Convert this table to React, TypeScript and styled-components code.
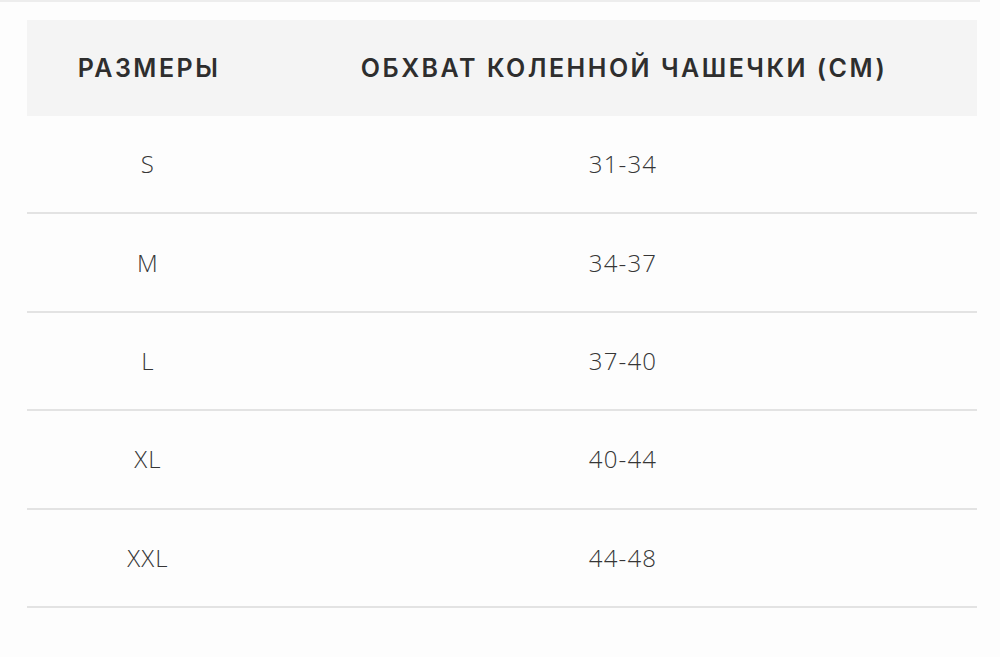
import styled, { createGlobalStyle } from 'styled-components';

type TSizeRow = {
  size: string;
  range: string;
};

const rows: TSizeRow[] = [
  { size: 'S', range: '31-34' },
  { size: 'M', range: '34-37' },
  { size: 'L', range: '37-40' },
  { size: 'XL', range: '40-44' },
  { size: 'XXL', range: '44-48' },
];

const GlobalStyle = createGlobalStyle`
  html, body {
    margin: 0;
    padding: 0;
    background: #fdfdfd;
  }
  body {
    font-family: 'Open Sans', 'Liberation Sans', sans-serif;
  }
`;

const App = () => {
  return (
    <>
      <GlobalStyle />
      <PageWrapper>
        <SizeTable>
          <HeaderRow>
            <Cell>РАЗМЕРЫ</Cell>
            <Cell>ОБХВАТ КОЛЕННОЙ ЧАШЕЧКИ (СМ)</Cell>
          </HeaderRow>
          {rows.map((row) => (
            <BodyRow key={row.size}>
              <Cell>{row.size}</Cell>
              <Cell>{row.range}</Cell>
            </BodyRow>
          ))}
        </SizeTable>
      </PageWrapper>
    </>
  );
};

export default App;

const PageWrapper = styled.div`
  width: 980px;
  height: 657px;
  border-top: 2px solid #ededed;
  padding: 18px 0 0 27px;
  box-sizing: border-box;
`;

const SizeTable = styled.div`
  width: 950px;
  display: flex;
  flex-direction: column;
`;

const Cell = styled.div`
  display: flex;
  align-items: center;
  justify-content: center;
`;

const HeaderRow = styled.div`
  display: grid;
  grid-template-columns: 242px 1fr;
  height: 96px;
  background: #f4f4f4;
  color: #2e2e2e;
  font-family: 'Inter', 'Open Sans', sans-serif;
  font-size: 25px;
  font-weight: 600;
  letter-spacing: 2.5px;
  ${Cell} {
    padding-left: 2px;
  }
`;

const BodyRow = styled.div`
  display: grid;
  grid-template-columns: 242px 1fr;
  height: 98.4px;
  box-sizing: border-box;
  border-bottom: 2px solid #e3e3e3;
  color: #363636;
  font-size: 24px;
  font-weight: 300;
  letter-spacing: 1.2px;
  ${Cell} {
    padding-bottom: 1px;
  }
`;
